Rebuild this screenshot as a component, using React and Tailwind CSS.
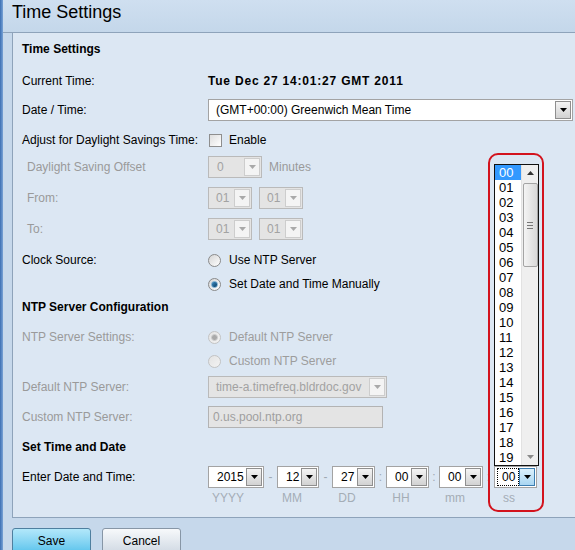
import React from "react";

const Tri = ({ color = "#000" }) => (
  <svg width="7" height="4" viewBox="0 0 7 4">
    <path d="M0 0H7L3.5 4Z" fill={color} />
  </svg>
);

function Sel({ cls, text, disabled, focused, pl = "pl-[7px]" }) {
  const box = disabled
    ? "border-[#bababa] bg-[#e4e4e4] text-[#a2a2a2]"
    : "border-[#a3a3a3] bg-white text-black";
  const arrow = focused
    ? "border-[#3c7db0] bg-gradient-to-b from-[#dcf0fb] to-[#a9d6f2]"
    : disabled
    ? "border-[#cdcdcd] bg-[#f4f4f4]"
    : "border-[#8f8f8f] bg-gradient-to-b from-[#f4f4f4] to-[#d2d2d2]";
  return (
    <div className={`flex h-[22px] border ${box} ${cls} ${focused ? "border-[#6a6a6a]" : ""}`}>
      <div className={`flex-1 flex items-center ${focused ? "pl-[2px] py-[1px]" : pl} overflow-hidden whitespace-nowrap`}>
        {focused ? (
          <span className="border border-dotted border-black h-full w-full flex items-center pl-[4px]">{text}</span>
        ) : (
          text
        )}
      </div>
      <div className={`w-[16px] my-[1px] mr-[1px] border flex items-center justify-center shrink-0 ${arrow}`}>
        <Tri color={disabled ? "#a9a9a9" : "#000"} />
      </div>
    </div>
  );
}

function Radio({ checked, disabled }) {
  const ring = disabled
    ? "border-[#c3c3c3] bg-gradient-to-br from-[#e3e3e3] to-[#f3f3f3]"
    : "border-[#8a8a8a] bg-gradient-to-br from-[#d5d5d5] to-white";
  return (
    <span className={`w-[13px] h-[13px] rounded-full border flex items-center justify-center shrink-0 ${ring}`}>
      {checked && (
        <span
          className={`w-[7px] h-[7px] rounded-full border ${
            disabled
              ? "bg-[#a9a9a9] border-[#cfcfcf]"
              : "bg-gradient-to-br from-[#3d8bc0] to-[#0a3f66] border-[#6fa6cc]"
          }`}
        />
      )}
    </span>
  );
}

function Row({ label, mt, children, indent, gray, bold }) {
  return (
    <div className={`flex h-[22px] items-center ${mt}`}>
      <div
        className={`w-[186px] shrink-0 ${indent ? "pl-[5px]" : ""} ${gray ? "text-[#9a9a9a]" : "text-black"} ${
          bold ? "font-bold" : ""
        }`}
      >
        {label}
      </div>
      <div className="flex items-center">{children}</div>
    </div>
  );
}

const Field = ({ selCls, lblCls, text, label, focused }) => (
  <div className="flex flex-col">
    <Sel cls={selCls} text={text} focused={focused} pl="pl-[8px]" />
    <div className={`mt-[3px] leading-[14px] text-center text-[#a4adb6] ${lblCls}`}>{label}</div>
  </div>
);

const Sep = ({ cls, ch }) => (
  <div className={`h-[22px] flex items-center justify-center text-[#a0a9b2] ${cls}`}>{ch}</div>
);

export default function App() {
  const items = Array.from({ length: 20 }, (_, i) => String(i).padStart(2, "0"));
  return (
    <div className="relative w-[575px] h-[550px] overflow-hidden flex bg-[#c6d8eb] font-['Liberation_Sans',Arial,sans-serif] text-[12px] text-black">
      <div className="w-[3px] shrink-0 bg-gradient-to-r from-[#3b6fb3] to-[#79a3d6]" />
      <div className="flex-1 flex flex-col min-w-0">
        <div className="h-[33px] shrink-0 border-b border-[#8ea3ba] bg-gradient-to-b from-[#cfdff0] to-[#c4d7ea] pl-[9px] pt-[2px] text-[18px] leading-[20px]">
          Time Settings
        </div>
        <div className="ml-[9px] h-[485px] shrink-0 border-l border-b border-[#8ea3ba] bg-[#dce7f3] pl-[9px] pt-[5px]">
          <div className="h-[22px] flex items-center font-bold">Time Settings</div>

          <Row label="Current Time:" mt="mt-[10px]">
            <span className="font-bold tracking-[0.8px]">Tue Dec 27 14:01:27 GMT 2011</span>
          </Row>

          <Row label="Date / Time:" mt="mt-[7px]">
            <Sel cls="w-[365px]" text="(GMT+00:00) Greenwich Mean Time" />
          </Row>

          <Row label="Adjust for Daylight Savings Time:" mt="mt-[8px]">
            <span className="ml-[1px] w-[13px] h-[13px] border border-[#8e8e8e] bg-gradient-to-br from-[#dedede] to-white" />
            <span className="ml-[7px]">Enable</span>
          </Row>

          <Row label="Daylight Saving Offset" mt="mt-[5px]" indent gray>
            <Sel cls="w-[54px]" text="0" disabled pl="pl-[8px]" />
            <span className="ml-[7px] text-[#9a9a9a]">Minutes</span>
          </Row>

          <Row label="From:" mt="mt-[9px]" indent gray>
            <Sel cls="w-[44px]" text="01" disabled pl="pl-[7px]" />
            <Sel cls="w-[44px] ml-[7px]" text="01" disabled pl="pl-[7px]" />
          </Row>

          <Row label="To:" mt="mt-[9px]" indent gray>
            <Sel cls="w-[44px]" text="01" disabled pl="pl-[7px]" />
            <Sel cls="w-[44px] ml-[7px]" text="01" disabled pl="pl-[7px]" />
          </Row>

          <Row label="Clock Source:" mt="mt-[9px]">
            <Radio />
            <span className="ml-[8px]">Use NTP Server</span>
          </Row>

          <Row label="" mt="mt-[2px]">
            <Radio checked />
            <span className="ml-[8px]">Set Date and Time Manually</span>
          </Row>

          <div className="h-[22px] mt-[1px] flex items-center font-bold">NTP Server Configuration</div>

          <Row label="NTP Server Settings:" mt="mt-[8px]" gray>
            <Radio checked disabled />
            <span className="ml-[8px] text-[#9d9d9d]">Default NTP Server</span>
          </Row>

          <Row label="" mt="mt-[2px]" gray>
            <Radio disabled />
            <span className="ml-[8px] text-[#9d9d9d]">Custom NTP Server</span>
          </Row>

          <Row label="Default NTP Server:" mt="mt-[4px]" gray>
            <Sel cls="w-[179px]" text="time-a.timefreq.bldrdoc.gov" disabled pl="pl-[7px]" />
          </Row>

          <Row label="Custom NTP Server:" mt="mt-[8px]" gray>
            <div className="w-[175px] h-[22px] border border-[#b3b3b3] bg-[#e4e4e4] text-[#9f9f9f] flex items-center pl-[4px]">
              0.us.pool.ntp.org
            </div>
          </Row>

          <div className="h-[22px] mt-[8px] flex items-center font-bold">Set Time and Date</div>

          <div className="flex mt-[8px]">
            <div className="w-[186px] shrink-0 h-[22px] flex items-center">Enter Date and Time:</div>
            <div className="flex">
              <Field selCls="w-[56px]" lblCls="w-[40px]" text="2015" label="YYYY" />
              <Sep cls="w-[13px]" ch="-" />
              <Field selCls="w-[42px]" lblCls="w-[30px]" text="12" label="MM" />
              <Sep cls="w-[13px]" ch="-" />
              <Field selCls="w-[43px]" lblCls="w-[30px]" text="27" label="DD" />
              <Sep cls="w-[11px]" ch=":" />
              <Field selCls="w-[43px]" lblCls="w-[30px]" text="00" label="HH" />
              <Sep cls="w-[10px]" ch=":" />
              <Field selCls="w-[44px]" lblCls="w-[32px]" text="00" label="mm" />
              <Sep cls="w-[11px]" ch=":" />
              <Field selCls="w-[43px]" lblCls="w-[30px]" text="00" label="ss" focused />
            </div>
          </div>
        </div>

        <div className="flex gap-[11px] ml-[9px] mt-[10px]">
          <button className="w-[79px] h-[26px] rounded-t-[3px] border border-[#4f7f9f] bg-gradient-to-b from-[#b2e8fa] to-[#58c3ec] text-[12px] leading-[22px] text-black">
            Save
          </button>
          <button className="w-[79px] h-[26px] rounded-t-[3px] border border-[#8796a6] bg-gradient-to-b from-[#f7f9fb] to-[#d0d9e3] text-[12px] leading-[22px] text-black">
            Cancel
          </button>
        </div>
      </div>

      {/* open dropdown list */}
      <div className="absolute left-[494px] top-[164px] w-[45px] h-[302px] border border-[#111] bg-white flex">
        <div className="w-[26px] flex flex-col">
          {items.map((t, i) => (
            <div
              key={t}
              className={`h-[15px] leading-[15px] pl-[4px] text-[13px] ${i === 0 ? "bg-[#3399ff] text-white" : "text-black"}`}
            >
              {t}
            </div>
          ))}
        </div>
        <div className="w-[17px] bg-[#efefef] border-l border-[#e2e2e2] flex flex-col items-center">
          <div className="h-[16px] flex items-center justify-center">
            <svg width="7" height="4" viewBox="0 0 7 4">
              <path d="M0 4H7L3.5 0Z" fill="#333" />
            </svg>
          </div>
          <div className="mt-[2px] w-[15px] h-[84px] rounded-[2px] border border-[#a4a4a4] bg-gradient-to-r from-[#f4f4f4] to-[#d9d9d9] flex flex-col items-center justify-center gap-[2px]">
            <span className="w-[6px] h-px bg-[#777]" />
            <span className="w-[6px] h-px bg-[#777]" />
            <span className="w-[6px] h-px bg-[#777]" />
          </div>
          <div className="flex-1" />
          <div className="h-[16px] flex items-center justify-center">
            <Tri color="#8a8a8a" />
          </div>
        </div>
      </div>

      {/* red highlight */}
      <div className="absolute left-[488px] top-[153px] w-[56px] h-[359px] border-2 border-[#d3131d] rounded-[10px]" />
    </div>
  );
}
